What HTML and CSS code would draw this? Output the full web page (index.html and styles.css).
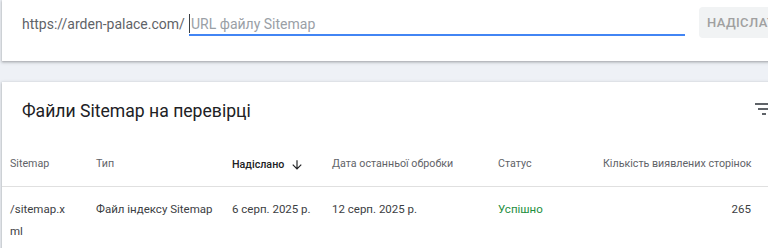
FILE: index.html
```html
<!DOCTYPE html>
<html lang="uk">
<head>
<meta charset="utf-8">
<link rel="stylesheet" href="styles.css">
</head>
<body>
<div class="page">
  <div class="card submit">
    <span class="prefix">https://arden-palace.com/</span>
    <div class="field">
      <span class="caret"></span><span class="placeholder">URL файлу Sitemap</span>
    </div>
    <button class="send">НАДІСЛАТИ</button>
  </div>
  <div class="card list">
    <div class="list-head">
      <h2 class="title">Файли Sitemap на перевірці</h2>
      <svg class="filter" width="24" height="24" viewBox="0 0 24 24"><path d="M10 18h4v-2h-4v2zM3 6v2h18V6H3zm3 7h12v-2H6v2z" fill="#5f6368"/></svg>
    </div>
    <div class="row header">
      <div class="c c1">Sitemap</div>
      <div class="c c2">Тип</div>
      <div class="c c3 sorted">Надіслано <svg class="arrow" width="14" height="14" viewBox="0 0 24 24"><path d="M20 12l-1.41-1.41L13 16.17V4h-2v12.17l-5.58-5.59L4 12l8 8 8-8z" fill="#202124"/></svg></div>
      <div class="c c4">Дата останньої обробки</div>
      <div class="c c5">Статус</div>
      <div class="c c6">Кількість виявлених сторінок</div>
    </div>
    <div class="row data">
      <div class="c c1 wrap">/sitemap.xml</div>
      <div class="c c2">Файл індексу Sitemap</div>
      <div class="c c3">6 серп. 2025 р.</div>
      <div class="c c4">12 серп. 2025 р.</div>
      <div class="c c5 ok">Успішно</div>
      <div class="c c6">265</div>
    </div>
  </div>
</div>
</body>
</html>
```
FILE: styles.css
```css
html, body {
  margin: 0;
  padding: 0;
  overflow: hidden;
  background: #eef1f6;
  font-family: Roboto, "Noto Sans", Arial, sans-serif;
}
.page {
  width: 820px;
  padding-left: 2px;
}
.card {
  background: #fff;
  box-shadow: 0 1px 2px rgba(60,64,67,0.3), 0 1px 3px 1px rgba(60,64,67,0.15);
}
.submit {
  height: 61px;
  display: flex;
  align-items: flex-start;
  padding-left: 20px;
  box-sizing: border-box;
}
.prefix {
  font-size: 14px;
  color: #5f6368;
  margin-top: 14px;
  line-height: 20px;
  width: 167px;
  white-space: nowrap;
}
.field {
  width: 496px;
  height: 36px;
  border-bottom: 2px solid #4285f4;
  display: flex;
  align-items: flex-start;
  box-sizing: border-box;
  padding-top: 14px;
}
.caret {
  width: 1px;
  height: 19px;
  background: #3c4043;
  margin-right: 1px;
}
.placeholder {
  font-size: 14px;
  line-height: 20px;
  color: #9aa0a6;
}
.send {
  margin-left: 14px;
  margin-top: 7px;
  height: 31px;
  padding: 0 8px;
  border: none;
  border-radius: 4px;
  background: #f1f3f4;
  color: #a0a0a0;
  font-family: Roboto, Arial, sans-serif;
  font-weight: 500;
  font-size: 13px;
  letter-spacing: 0.4px;
  white-space: nowrap;
}
.list {
  margin-top: 21px;
  padding-bottom: 20px;
}
.list-head {
  height: 66px;
  display: flex;
  align-items: flex-start;
  justify-content: space-between;
  padding-left: 20px;
  box-sizing: border-box;
}
.title {
  margin: 17px 0 0;
  font-weight: 400;
  font-size: 17.6px;
  line-height: 24px;
  color: #202124;
}
.filter {
  margin-top: 15px;
  margin-right: 46px;
}
.row {
  display: grid;
  grid-template-columns: 86px 136px 100px 166px 105px 148px;
  padding-left: 8px;
}
.header {
  height: 39px;
  box-sizing: border-box;
  padding-top: 10px;
  align-items: start;
  border-bottom: 1px solid #e0e0e0;
  font-size: 10.7px;
  line-height: 12px;
  color: #5f6368;
  white-space: nowrap;
}
.data {
  padding-top: 11px;
  font-size: 11.5px;
  color: #3c4043;
  line-height: 22px;
}
.c1 {
  padding-right: 22px;
}
.wrap {
  word-break: break-all;
}
.sorted {
  color: #202124;
  font-weight: 500;
  display: flex;
  align-items: center;
}
.arrow {
  margin-left: 6px;
}
.c6 {
  text-align: right;
}
.ok {
  color: #1e8e3e;
}
```
